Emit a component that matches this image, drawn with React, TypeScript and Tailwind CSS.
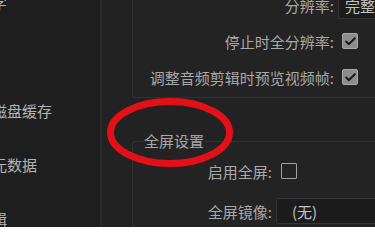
import { CheckIcon } from 'lucide-react';

const font = { fontFamily: '"Noto Sans CJK SC", "Noto Sans", sans-serif' };

function Checkbox({ checked }: { checked?: boolean }) {
	if (checked) {
		return (
			<div className="flex h-[16px] w-[16px] items-center justify-center rounded-[2px] border border-[#a8a8a8] bg-[#8c8c8c]">
				<CheckIcon className="text-[#111111]" size={13} strokeWidth={3.4} />
			</div>
		);
	}
	return <div className="h-[16px] w-[16px] rounded-[1px] border-[1.5px] border-[#a0a0a0]" />;
}

export default function App() {
	return (
		<div
			className="relative flex h-[227px] w-[375px] overflow-hidden bg-[#1e1e1e] text-[15px] leading-none text-[#a9a9a9]"
			style={font}
		>
			<div className="flex w-[100px] shrink-0 flex-col overflow-hidden bg-[#1e1e1e] text-[#b4b4b4]">
				<div className="ml-[-23px] mt-[-5px] h-[15px] whitespace-nowrap">名字</div>
				<div className="ml-[-8px] mt-[93px] whitespace-nowrap">磁盘缓存</div>
				<div className="ml-[-8px] mt-[39px] whitespace-nowrap">元数据</div>
				<div className="ml-[-23px] mt-[39px] whitespace-nowrap">编辑</div>
			</div>
			<div className="w-[2px] shrink-0 bg-[#2b2b2b]" />
			<div className="flex flex-1 flex-col bg-[#222222] pl-[30px]">
				<div className="mt-[-13px] flex flex-col rounded-bl-[3px] border-b border-l border-[#303030] bg-[#232323] pb-[2px]">
					<div className="flex h-[36px] items-center">
						<div className="w-[201px] text-right whitespace-nowrap">分辨率:</div>
						<div className="ml-[4px] flex h-[27px] flex-1 items-center rounded-l-[2px] border border-[#363636] bg-[#1c1c1c] pl-[6px] text-[#c4c4c4] whitespace-nowrap">
							完整
						</div>
					</div>
					<div className="flex h-[36px] items-center">
						<div className="w-[201px] text-right whitespace-nowrap">停止时全分辨率:</div>
						<div className="ml-[8px]">
							<Checkbox checked />
						</div>
					</div>
					<div className="flex h-[36px] items-center">
						<div className="w-[201px] text-right whitespace-nowrap">调整音频剪辑时预览视频帧:</div>
						<div className="ml-[8px]">
							<Checkbox checked />
						</div>
					</div>
				</div>
				<div className="mt-[43px] flex flex-1 flex-col rounded-tl-[3px] border-l border-t border-[#303030] bg-[#232323]">
					<div className="ml-[10px] mt-[-9px] w-fit bg-[#232323] px-[1px] whitespace-nowrap">全屏设置</div>
					<div className="mt-[8px] flex h-[30px] items-center">
						<div className="w-[139px] text-right whitespace-nowrap">启用全屏:</div>
						<div className="ml-[9px]">
							<Checkbox />
						</div>
					</div>
					<div className="mt-[12px] flex items-center">
						<div className="w-[139px] text-right whitespace-nowrap">全屏镜像:</div>
						<div className="ml-[4px] flex h-[26px] flex-1 items-center rounded-l-[3px] border border-[#363636] bg-[#1c1c1c] pl-[15px] text-[#c4c4c4] whitespace-nowrap">
							(无)
						</div>
					</div>
				</div>
			</div>
			<svg className="pointer-events-none absolute left-0 top-0" width="375" height="227" viewBox="0 0 375 227">
				<ellipse cx="170" cy="132.5" rx="59.5" ry="31" fill="none" stroke="#e3101a" strokeWidth="7" />
			</svg>
		</div>
	);
}
